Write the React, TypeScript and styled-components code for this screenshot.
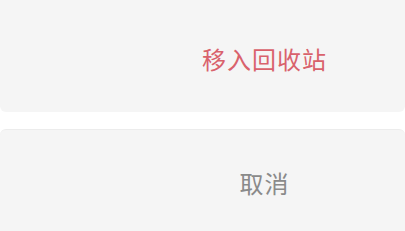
import React from "react"
import styled, { createGlobalStyle } from "styled-components"

const GlobalStyle = createGlobalStyle`
  html, body {
    margin: 0;
    padding: 0;
    background: #ffffff;
  }
  body {
    font-family: "Noto Sans CJK SC", "Noto Sans", sans-serif;
  }
`

const Sheet = styled.div`
  width: 405px;
  height: 231px;
  display: flex;
  flex-direction: column;
  gap: 17px;
  overflow: hidden;
  background: #ffffff;
`

const Action = styled.div<{ $height: number; $color: string; $radius: string; $line?: boolean }>`
  height: ${({ $height }) => $height}px;
  flex-shrink: 0;
  box-sizing: border-box;
  display: flex;
  align-items: center;
  justify-content: center;
  padding: 4px 0 0 124px;
  background: #f5f5f5;
  border-radius: ${({ $radius }) => $radius};
  border-top: ${({ $line }) => ($line ? "1px solid #ececec" : "none")};
  color: ${({ $color }) => $color};
  font-size: 24px;
  letter-spacing: 1px;
`

export default function App() {
  return (
    <>
      <GlobalStyle />
      <Sheet>
        <Action $height={112} $color="#d9626c" $radius="0 0 6px 6px">
          移入回收站
        </Action>
        <Action $height={102} $color="#8a8a8a" $radius="6px 6px 0 0" $line>
          取消
        </Action>
      </Sheet>
    </>
  )
}
